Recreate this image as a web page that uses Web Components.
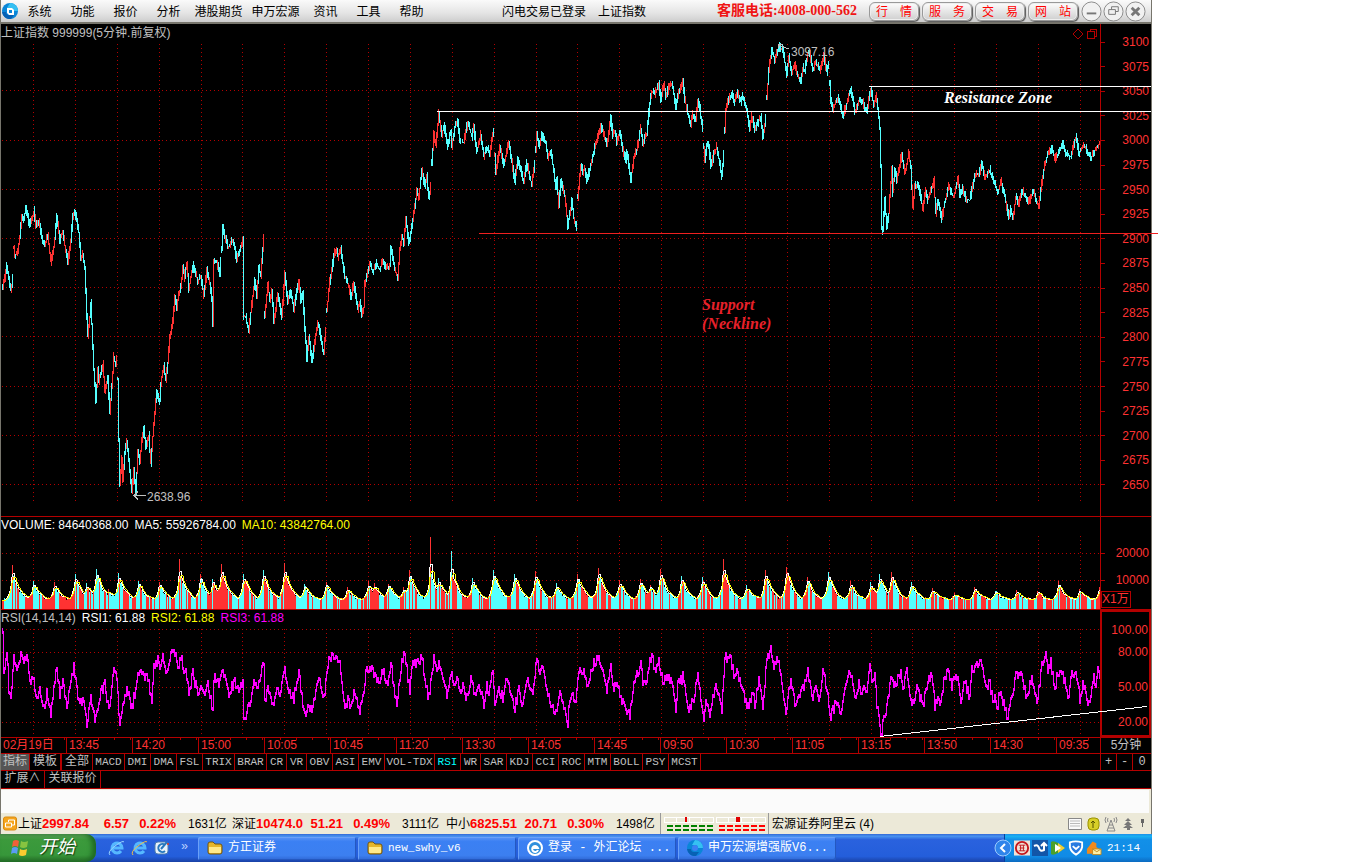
<!DOCTYPE html>
<html lang="zh-CN">
<head>
<meta charset="utf-8">
<title>上证指数 999999</title>
<style>
  body {
    margin: 0;
    background: #fff;
    font: 12px/16px "Liberation Sans", "Noto Sans CJK SC", sans-serif;
  }
</style>
</head>
<body>
<trading-desk></trading-desk>

<script>
// Crea el Shadow DOM y agrega los estilos comunes
function render(host, html) {
  host.attachShadow({ mode: 'open' }).innerHTML = `
    <style>
      * { box-sizing: border-box; }
      button {
        font: inherit; color: inherit; background: none;
        border: 0; margin: 0; padding: 0; white-space: nowrap; cursor: pointer;
      }
      svg { display: block; }
    </style>` + html;
}

// Números seudoaleatorios estables
function randomizer(seed) {
  return () => {
    seed = (seed * 1103515245 + 12345) % 2147483648;
    return seed / 2147483648;
  };
}

// "x,y x,y | x,y" -> lista de tramos
function parseRuns(text) {
  return text.split('|').map(run => run.trim().split(/\s+/).map(p => p.split(',').map(Number)));
}

function valueAt(points, x) {
  for (let i = 1; i < points.length; i++) {
    const [x0, y0] = points[i - 1];
    const [x1, y1] = points[i];
    if (x <= x1) return y0 + (y1 - y0) * (x - x0) / (x1 - x0 || 1);
  }
  return points[points.length - 1][1];
}

const PRICE = parseRuns(`
  2,287 4,278 6,266 8,279 10,291 12,278 |
  13,246 14,256 17,252 19,236 21,217 23,220 25,207 29,227 33,211 35,227 38,220 41,238 44,246 47,235 50,262 53,248
  56,217 59,240 62,232 64,246 67,264 70,240 72,218 74,211 78,233 80,258 82,253 84,268 86,317 87,336 89,317 90,303
  92,347 93,370 95,402 97,368 98,382 100,374 102,364 104,390 107,380 109,414 111,387 113,357 115,366 116,358 |
  117,380 118,440 119,486 121,457 122,480 124,453 126,440 129,470 131,492 133,471 135,494 137,453 139,463 141,440
  143,429 145,448 148,436 150,463 152,437 154,412 156,392 159,402 160,383 163,366 165,380 167,363 169,338 172,320
  174,297 176,308 178,293 180,288 182,268 184,278 186,262 188,290 190,277 193,266 197,281 200,277 203,296 206,271
  209,283 211,298 212,326 213,262 216,262 219,275 220,260 |
  221,250 222,228 227,248 232,240 236,260 239,250 242,241 243,316 245,318 248,332 250,313 254,280 256,298 258,266
  260,276 263,238 |
  264,316 267,284 269,300 271,292 273,321 277,295 281,317 284,275 287,302 290,292 293,309 298,282 300,301 302,293
  304,329 306,358 308,337 311,361 314,343 317,323 320,337 322,350 323,352 325,328 |
  326,311 329,282 333,257 335,249 337,257 340,249 344,277 347,283 350,298 353,283 357,309 359,302 361,314 363,308
  364,285 369,263 372,273 375,264 379,270 382,260 385,269 389,267 390,248 394,270 397,277 399,250 401,235 403,243
  405,219 408,244 412,220 416,192 418,198 421,169 424,187 426,177 428,198 430,184 |
  431,163 433,134 435,145 438,113 441,137 443,125 447,146 450,130 451,147 454,127 457,122 459,142 463,142 467,122
  471,137 473,128 476,152 480,135 483,157 486,147 489,155 491,138 493,129 |
  494,154 495,174 499,145 503,166 508,142 511,163 514,181 517,160 520,170 523,183 526,163 531,185 534,162 |
  535,150 536,133 538,146 541,135 545,142 547,158 550,150 553,173 555,188 556,178 558,206 560,181 564,197 567,226
  571,201 573,217 576,230 |
  577,197 580,166 582,172 584,168 586,182 591,160 595,143 600,127 603,134 606,145 610,119 612,135 614,130 616,142
  619,133 622,150 625,160 626,152 630,181 633,157 636,150 640,128 642,143 646,133 649,103 651,92 654,94 658,85
  660,100 663,84 665,96 668,88 671,84 673,93 675,108 678,92 682,81 684,100 687,113 690,126 692,114 695,121 697,101
  699,108 702,131 |
  703,148 704,160 706,145 708,146 710,166 713,155 716,147 721,176 723,155 |
  724,130 725,112 727,102 731,93 733,102 737,94 740,102 742,97 745,107 749,128 751,116 754,131 760,116 762,136 765,117 |
  766,98 768,70 771,49 774,60 778,46 780,50 782,49 786,75 788,58 791,73 794,64 797,75 800,81 802,68 804,71 807,53
  809,54 812,70 815,62 819,71 823,56 826,72 828,63 |
  829,84 830,100 832,109 837,97 842,116 847,100 850,89 854,112 858,101 862,103 866,112 870,88 873,107 875,96 877,107
  879,130 880,167 881,227 882,231 884,200 886,228 888,213 891,168 892,193 894,170 896,180 901,154 904,174 908,153
  910,167 912,207 914,187 917,183 922,208 925,190 927,200 933,181 935,213 937,200 941,219 944,202 948,187 953,197
  957,178 959,195 962,188 965,200 969,200 975,173 978,175 981,164 984,177 989,170 994,185 997,193 1000,182 1004,197
  1008,219 1010,208 1012,219 1015,197 1018,205 1021,190 1028,203 1033,190 1035,200 1038,206 1041,183 1044,165
  1047,153 1051,149 1054,159 1058,152 1062,144 1065,154 1070,157 1075,137 1078,153 1083,144 1090,159 1095,148 1100,142`);

const RSI = parseRuns(`
  2,629 3,672 6,650 8,687 10,700 13,658 16,667 21,653 23,665 26,654 29,682 32,675 36,697 39,690 43,708 46,692 50,712
  56,667 59,692 62,682 66,708 73,665 77,698 82,700 86,724 90,695 94,717 101,690 104,682 108,710 113,672 116,678
  119,724 123,700 126,690 131,707 137,678 142,673 147,678 151,700 153,668 157,660 159,670 162,658 165,673 171,651
  174,651 177,667 181,657 184,675 185,667 188,693 192,673 196,690 203,692 207,682 212,710 213,677 218,682 222,667
  228,692 234,680 239,690 242,677 243,718 246,712 250,700 253,680 256,688 260,673 263,663 264,700 267,687 273,705
  276,688 279,695 284,670 288,692 293,697 298,670 302,705 305,720 307,700 310,710 318,678 323,700 327,663 334,654
  340,668 344,707 348,698 350,707 353,690 359,710 362,697 365,670 371,667 373,677 378,682 382,670 387,688 390,660
  394,697 396,705 401,660 404,654 407,677 409,690 412,660 416,665 421,654 424,680 428,698 433,657 436,670 438,660
  442,680 446,693 451,673 453,685 456,677 460,693 462,680 465,698 470,680 475,697 478,680 483,707 486,683 488,692
  492,670 494,707 498,687 502,698 506,677 511,698 514,707 518,690 521,703 526,680 532,690 536,657 538,672 542,670
  546,687 550,702 554,718 556,705 560,692 563,703 567,722 569,697 571,690 575,702 578,670 583,670 586,687 591,667
  597,657 602,670 606,690 610,665 613,687 617,685 622,703 629,713 633,682 640,665 642,682 646,677 651,653 654,670
  658,662 662,680 666,678 670,677 675,710 677,685 682,677 688,713 693,698 697,673 703,718 705,703 709,712 715,683
  721,708 724,658 730,660 733,673 736,670 740,687 748,708 752,690 754,705 758,682 762,707 766,660 770,650 773,667
  777,660 780,677 785,708 790,683 795,707 801,690 807,672 812,695 814,685 819,700 822,670 827,690 829,717 835,702
  840,710 845,682 849,673 855,697 858,683 860,698 862,687 865,695 869,668 871,680 874,677 876,703 881,736 883,713
  885,712 890,677 894,683 900,672 902,688 906,673 911,708 916,690 920,698 923,703 925,685 931,675 934,705 937,697
  939,705 943,680 947,667 951,688 955,670 960,698 964,680 969,700 971,670 980,663 985,687 989,680 992,703 994,697
  996,710 999,690 1004,707 1007,718 1009,703 1015,677 1020,675 1026,697 1031,673 1034,695 1037,698 1041,665 1045,653
  1047,668 1050,662 1054,687 1057,673 1062,673 1067,697 1071,673 1074,670 1079,698 1082,683 1088,703 1093,678
  1095,688 1097,670 1100,677`)[0];

// Picos de volumen: x, altura y 1 si la vela baja
const VOLUME_PEAKS = `12,44 33,28,1 54,27 75,35,1 86,26,1 96,40,1 108,20 118,36,1 138,28,1 159,27 179,50 200,35 212,30,1
  221,45 243,35,1 263,39,1 284,46 304,25,1 326,27 347,22 368,28 374,26 388,25 403,22 409,39 430,72 438,31,1 451,58,1
  472,31,1 493,39,1 514,35,1 535,38 556,26,1 577,35 598,41 619,29 640,30 650,24 660,40 681,33,1 702,32,1 723,50
  746,24,1 765,39 786,42 807,32 828,37,1 850,28 870,27,1 879,35,1 891,37 911,27,1 932,21 954,16 974,22 995,18,1
  1016,19 1037,18 1058,28 1079,20 1099,22`.split(/\s+/).map(p => p.split(',').map(Number));

// Rejilla punteada compartida por los tres paneles
function gridLines(top, bottom, rows) {
  let d = '';
  for (let i = 0; i < 26; i++) {
    d += `M${Math.round(33 + i * 41.88) + 0.5} ${top}V${bottom}`;
  }
  rows.forEach(y => { d += `M2 ${y + 0.5}H1100`; });
  return `<path d="${d}" stroke="#b40000" stroke-dasharray="1 3" fill="none"/>`;
}

function priceBars() {
  const rand = randomizer(77);
  let up = '';
  let down = '';
  PRICE.forEach(run => {
    const first = run[0][0];
    const last = run[run.length - 1][0];
    for (let x = first; x <= last; x++) {
      const from = valueAt(run, Math.max(first, x - 1));
      const to = valueAt(run, x);
      const high = Math.round(Math.min(from, to) - rand() * 5);
      const low = Math.round(Math.max(from, to) + rand() * 4);
      const bar = `M${x} ${high}h1V${low}h-1z`;
      const rising = to < from ? rand() < 0.6 : rand() < 0.15;
      if (rising) up += bar; else down += bar;
    }
  });
  return `<path d="${up}" fill="#ff3232"/><path d="${down}" fill="#54ffff"/>`;
}

function rsiLine() {
  const rand = randomizer(19);
  let d = '';
  let from = 629;
  for (let x = 2; x <= 1099; x++) {
    const to = Math.min(Math.round(valueAt(RSI, x) + (rand() - 0.5) * 10), 734);
    d += `M${x} ${Math.min(from, to) - 1}h1V${Math.max(from, to) + 2}h-1z`;
    from = to;
  }
  return `<path d="${d}" fill="#ff00ff"/>`;
}

function volumeBars() {
  const rand = randomizer(5);
  const heights = [];
  const falling = {};
  VOLUME_PEAKS.forEach(([px, , down]) => { falling[px] = Boolean(down); });
  for (let x = 2; x <= 1100; x++) {
    let h = (x > 910 ? 5 : 7) + rand() * 4;
    VOLUME_PEAKS.forEach(([px, ph]) => {
      const away = x - px;
      const body = Math.min(ph * 0.85, 36) - 6;
      if (away === 0) h = Math.max(h, ph);
      else if (away > 0) h = Math.max(h, 6 + body * Math.exp(-away / 7) + rand() * 4);
      else if (away > -7) h = Math.max(h, 6 + body * Math.exp(away / 3) + rand() * 3);
    });
    heights.push(h);
  }
  let up = '';
  let down = '';
  let rising = true;
  heights.forEach((h, i) => {
    const x = i + 2;
    if (rand() < 0.55) rising = rand() < 0.42;
    const bar = `M${x} 609V${Math.round(609 - h)}h1V609z`;
    if (x in falling ? !falling[x] : rising) up += bar; else down += bar;
  });
  const average = n => 'M' + heights.map((h, i) => {
    const part = heights.slice(Math.max(0, i - n + 1), i + 1);
    return `${i + 2} ${Math.round(609 - part.reduce((a, b) => a + b, 0) / part.length)}`;
  }).join('L');
  return `<path d="${up}" fill="#ff3232"/><path d="${down}" fill="#54ffff"/>
    <path d="${average(3)}" fill="none" stroke="#fff"/>
    <path d="${average(5)}" fill="none" stroke="#ff0"/>`;
}

const SWIRL = `
  <circle cx="8" cy="8" r="8" fill="#0a86d8"/>
  <path d="M8 0a8 8 0 0 1 8 8h-5a3 3 0 0 0-3-3H5z" fill="#35c0f2"/>
  <path d="M0 9a8 8 0 0 0 9 7l3-4H7a3 3 0 0 1-3-3z" fill="#0761b4"/>`;

// Barra superior con el menú
class TitleBar extends HTMLElement {
  constructor() {
    super();
    const menu = ['系统', '功能', '报价', '分析', '港股期货', '申万宏源', '资讯', '工具', '帮助'];
    const links = ['行　情', '服　务', '交　易', '网　站'];
    render(this, `
      <style>
        :host {
          display: flex; align-items: center; height: 24px; color: #000;
          background: linear-gradient(#fafafa, #e4e4e4 60%, #cdcdcd);
          border-bottom: 2px solid #77756c; font-family: "Noto Sans CJK SC", sans-serif;
        }
        nav { display: flex; width: 433px; }
        .logo { margin-left: 1px; flex: none; }
        nav button { width: 43px; }
        nav button.wide { width: 57px; }
        .state { display: flex; gap: 12px; flex: 1; margin-left: 51px; white-space: nowrap; }
        .phone { color: #f01414; font: bold 14px/16px "Liberation Serif", "Noto Sans CJK SC", serif; white-space: nowrap; margin-right: 12px; }
        .links { display: flex; gap: 3px; margin-right: 3px; }
        .links button {
          width: 50px; height: 19px; line-height: 16px; color: #f00;
          border: 1px solid #999; border-radius: 6px; background: linear-gradient(#fdfdfd, #cfcfcf);
          box-shadow: inset 0 0 0 1px #eee, 1px 1px 1px #555;
        }
        .window { display: flex; gap: 1px; margin-right: 5px; }
      </style>
      <svg class="logo" width="16" height="16" viewBox="0 0 16 16">${SWIRL}<path d="M5 5h5l2 2v5H7L5 10z" fill="#fff"/><path d="M7 7h3v3H7z" fill="#0a86d8"/></svg>
      <nav>${menu.map(m => `<button class="${m.length > 2 ? 'wide' : ''}">${m}</button>`).join('')}</nav>
      <div class="state"><span>闪电交易已登录</span><span>上证指数</span></div>
      <span class="phone">客服电话:4008-000-562</span>
      <div class="links">${links.map(l => `<button>${l}</button>`).join('')}</div>
      <div class="window">
        ${['M6 13h10', 'M9 9V6h7v5h-3M6 9h7v5H6z', 'M7 7l8 8M15 7l-8 8'].map((d, i) => `
          <button aria-label="${['最小化', '还原', '关闭'][i]}"><svg width="21" height="21" viewBox="0 0 22 22">
            <circle cx="11" cy="11" r="10" fill="#f1f1f1" stroke="#888" stroke-width="1"/>
            <path d="${d}" fill="none" stroke="#777" stroke-width="${[2, 1, 3][i]}"/>
          </svg></button>`).join('')}
      </div>`);
  }
}
customElements.define('title-bar', TitleBar);

// Un panel: encabezado, dibujo y escala a la derecha
class ChartPanel extends HTMLElement {
  constructor() {
    super();
    render(this, `
      <style>
        :host { display: flex; border-bottom: 1px solid #b40000; }
        .plot { flex: 1; min-width: 0; display: flex; flex-direction: column; }
        header { display: flex; gap: 6px; height: 16px; line-height: 16px; color: #fff; white-space: nowrap; }
        :host([kind="price"]) header { height: 18px; line-height: 18px; }
        .area { flex: 1; min-height: 0; position: relative; }
        .area svg { position: absolute; inset: 0; width: 100%; height: 100%; }
        .scale { width: 51px; flex: none; border-left: 1px solid #b40000; color: #ff3232; }
      </style>
      <div class="plot">
        <header><slot name="title"></slot></header>
        <div class="area"></div>
      </div>
      <div class="scale"><slot></slot></div>`);
  }

  connectedCallback() {
    const kinds = {
      price: ['1 42 1099 474', () => gridLines(44, 502, [90, 140, 189, 238, 287, 336, 386, 435, 484]) + priceBars()],
      volume: ['1 533 1099 76', () => gridLines(536, 609, [553, 580]) + volumeBars()],
      rsi: ['1 626 1099 111', () => gridLines(629, 737, [629, 652, 687, 722]) + rsiLine()]
    };
    const [box, draw] = kinds[this.getAttribute('kind')];
    this.shadowRoot.querySelector('.area').innerHTML =
      `<svg viewBox="${box}" preserveAspectRatio="none" shape-rendering="crispEdges">${draw()}</svg>`;
  }
}
customElements.define('chart-panel', ChartPanel);

// Los tres paneles y las anotaciones
class ChartBoard extends HTMLElement {
  constructor() {
    super();
    const prices = [];
    for (let p = 3100; p >= 2650; p -= 25) prices.push(p);
    render(this, `
      <style>
        :host { position: relative; display: flex; flex-direction: column; background: #000; }
        chart-panel[kind="price"] { flex: 1; }
        chart-panel[kind="volume"] { height: 93px; }
        chart-panel[kind="rsi"] { height: 127px; border-bottom: 0; }
        .muted { color: #c0c0c0; }
        .yellow { color: #ff0; }
        .magenta { color: #f0f; }
        .tools { margin-left: auto; margin-right: 2px; display: flex; align-items: center; gap: 2px; }
        .labels { display: flex; flex-direction: column; height: 100%; padding-right: 2px; }
        .labels span { display: flex; justify-content: space-between; align-items: center; height: 16px; }
        .labels span::before { content: ""; width: 4px; height: 1px; background: #b40000; }
        .prices { justify-content: space-between; padding: 10px 2px 23px 0; }
        .volumes { padding-top: 28px; gap: 11px; }
        .volumes b {
          font-weight: normal; width: 30px; height: 17px; line-height: 15px; margin-top: -8px;
          border: 1px solid #b40000;
        }
        .levels { border: 2px solid #b40000; border-left-width: 1px; padding: 10px 1px 0 0; }
        .levels span::before { visibility: hidden; }
        .levels span + span { margin-top: 6px; }
        .levels span + span + span { margin-top: 19px; }
        .overlay { position: absolute; inset: 0; width: 100%; height: 100%; overflow: visible; pointer-events: none; }
        .note { position: absolute; white-space: nowrap; color: #c0c0c0; }
        .big { font: italic bold 16px/19px "Liberation Serif", serif; color: #fff; }
        .high { left: 790px; top: 20px; }
        .low { left: 146px; top: 465px; }
        .zone { right: 99px; top: 64px; }
        .neck { left: 701px; top: 271px; color: #e8202a; }
      </style>
      <chart-panel kind="price">
        <span slot="title" class="muted">上证指数 999999(5分钟.前复权)</span>
        <span slot="title" class="tools">
          <button aria-label="标记"><svg width="11" height="11"><path d="M5 1l5 5-5 5-5-5z" fill="none" stroke="#b40000"/></svg></button>
          <button aria-label="窗口"><svg width="12" height="11" shape-rendering="crispEdges"><path d="M1.500 3.500h7v7h-7zM4 3V1.500h6.500V8H9" fill="none" stroke="#b40000"/></svg></button>
        </span>
        <div class="labels prices">${prices.map(p => `<span>${p}</span>`).join('')}</div>
      </chart-panel>
      <chart-panel kind="volume">
        <span slot="title">VOLUME: 84640368.00</span>
        <span slot="title">MA5: 55926784.00</span>
        <span slot="title" class="yellow">MA10: 43842764.00</span>
        <div class="labels volumes"><span>20000</span><span>10000</span><b>X1万</b></div>
      </chart-panel>
      <chart-panel kind="rsi">
        <span slot="title" class="muted">RSI(14,14,14)</span>
        <span slot="title">RSI1: 61.88</span>
        <span slot="title" class="yellow">RSI2: 61.88</span>
        <span slot="title" class="magenta">RSI3: 61.88</span>
        <div class="labels levels"><span>100.00</span><span>80.00</span><span>50.00</span><span>20.00</span></div>
      </chart-panel>
      <svg class="overlay" viewBox="1 24 1150 713" preserveAspectRatio="none" fill="none" shape-rendering="crispEdges">
        <path d="M437 111.5H1151M869 86.5H1151M880 736.5L1147 706.5" stroke="#fff"/>
        <path d="M479 233.5H1158" stroke="#f02020"/>
        <path d="M789 49l-11-4M783 44h-5v4M146 495.500h-12M138 491.500l-4 4 4 4" stroke="#c0c0c0"/>
      </svg>
      <span class="note high">3097.16</span>
      <span class="note low">2638.96</span>
      <span class="note big zone">Resistance Zone</span>
      <span class="note big neck">Support<br>(Neckline)</span>`);
  }
}
customElements.define('chart-board', ChartBoard);

class TimeAxis extends HTMLElement {
  constructor() {
    super();
    const times = ['02月19日', '13:45', '14:20', '15:00', '10:05', '10:45', '11:20', '13:30', '14:05', '14:45',
      '09:50', '10:30', '11:05', '13:15', '13:50', '14:30', '09:35'];
    render(this, `
      <style>
        :host { display: flex; height: 16px; line-height: 15px; background: #000; border-top: 1px solid #b40000; color: #ff3232; }
        ol { flex: 1; display: flex; margin: 0; padding: 0; list-style: none; }
        li {
          flex: 66 1 0; min-width: 0; padding-left: 2px; border-right: 1px solid #b40000; white-space: nowrap;
          background: repeating-linear-gradient(90deg, transparent 0 15px, #b40000 15px 16px) top / 100% 2px no-repeat;
        }
        li:last-child { flex-grow: 43; border-right: 0; }
        b { width: 51px; border-left: 1px solid #b40000; color: #c0c0c0; font-weight: normal; text-align: center; }
      </style>
      <ol>${times.map(t => `<li>${t}</li>`).join('')}</ol><b>5分钟</b>`);
  }
}
customElements.define('time-axis', TimeAxis);

// Pestañas de indicadores
class IndicatorTabs extends HTMLElement {
  constructor() {
    super();
    const names = ['MACD', 'DMI', 'DMA', 'FSL', 'TRIX', 'BRAR', 'CR', 'VR', 'OBV', 'ASI', 'EMV', 'VOL-TDX', 'RSI',
      'WR', 'SAR', 'KDJ', 'CCI', 'ROC', 'MTM', 'BOLL', 'PSY', 'MCST'];
    render(this, `
      <style>
        :host { display: block; background: #000; color: #c0c0c0; font-family: "Liberation Mono", "Noto Sans CJK SC", monospace; }
        div { display: flex; height: 17px; line-height: 16px; border-top: 1px solid #b40000; }
        .more { height: 19px; line-height: 17px; border-bottom: 1px solid #b40000; }
        button { border-right: 1px solid #b40000; flex: none; }
        .code { font-size: 11px; }
        .group { width: 31px; }
        .group.on { width: 29px; background: #555; }
        .group.end { border-right-width: 2px; width: 32px; }
        .current { color: #00ffff; }
        .zoom { width: 16px; }
        .zoom.first { margin-left: auto; width: 17px; border-left: 1px solid #b40000; }
        .zoom:last-child { width: 18px; border-right: 0; }
        .expand { width: 44px; }
        .related { width: 56px; }
      </style>
      <div>
        <button class="group on">指标</button><button class="group end">模板</button><button class="group">全部</button>
        ${names.map(n => `<button class="code ${n === 'RSI' ? 'current' : ''}" style="width:${n.length * 6 + 8}px">${n}</button>`).join('')}
        <button class="zoom first">+</button><button class="zoom">-</button><button class="zoom">0</button>
      </div>
      <div class="more"><button class="expand">扩展∧</button><button class="related">关联报价</button></div>`);
  }
}
customElements.define('indicator-tabs', IndicatorTabs);

// Una cotización de índice en la barra de estado
class IndexQuote extends HTMLElement {
  constructor() {
    super();
    render(this, `
      <style>
        :host { display: grid; grid-template-columns: 24px 47px 40px 47px 56px; color: #000; white-space: nowrap; }
        b { color: #f00; font-size: 13px; }
        b + b { text-align: right; }
        i { font-style: normal; padding-left: 12px; }
      </style>
      <span><slot></slot></span>
      <b>${this.getAttribute('value')}</b><b>${this.getAttribute('change')}</b>
      <b>${this.getAttribute('percent')}</b><i>${this.getAttribute('amount')}</i>`);
  }
}
customElements.define('index-quote', IndexQuote);

class StatusBar extends HTMLElement {
  constructor() {
    super();
    const dashes = (x, y, color) => `<path d="M${x} ${y}h46M${x} ${y + 4}h46" stroke="${color}" stroke-width="2" stroke-dasharray="6 2"/>`;
    render(this, `
      <style>
        :host { display: flex; align-items: center; height: 21px; background: #ece9d8; color: #000; white-space: nowrap; }
        .copy { width: 16px; margin: 0 0 0 1px; flex: none; }
        .meter { border: 1px solid #999; border-width: 0 1px; height: 21px; margin: 0 3px 0 0; padding: 3px 2px 0; }
        .icons { display: flex; align-items: center; gap: 4px; margin-left: auto; margin-right: 4px; }
      </style>
      <svg class="copy" width="15" height="15" viewBox="0 0 15 15"><rect x="1" y="1" width="13" height="13" rx="2" fill="#f5a41c" stroke="#d98a10"/><path d="M6 6V4h6v5H9M3 7h6v4H3z" fill="none" stroke="#fff"/></svg>
      <index-quote value="2997.84" change="6.57" percent="0.22%" amount="1631亿">上证</index-quote>
      <index-quote value="10474.0" change="51.21" percent="0.49%" amount="3111亿">深证</index-quote>
      <index-quote value="6825.51" change="20.71" percent="0.30%" amount="1498亿">中小</index-quote>
      <div class="meter">
        <svg width="103" height="17" shape-rendering="crispEdges" fill="none">
          <path d="M1.500 1.500h49v5h-49zM13.500 2v5M26.500 2v5M38.500 2v5M53.500 1.500h49v5h-49zM65.500 2v5M78.500 2v5M90.500 2v5" stroke="#fff"/>
          <path d="M22 1h2v5h-2zM73 1h4v5h-4z" fill="#e00000"/>
          ${dashes(4, 10, '#008000')}${dashes(56, 10, '#ff0000')}
        </svg>
      </div>
      <span>宏源证券阿里云 (4)</span>
      <span class="icons">
        <svg width="15" height="14"><path d="M.5 1.500h13v11H.5z" fill="#fafafa" stroke="#888"/><path d="M2 4h10M2 6.500h10M2 9h10" stroke="#bbb"/></svg>
        <svg width="13" height="14"><rect x="1" y="1" width="11" height="12" rx="4" fill="#d8cf28" stroke="#9a9200"/><path d="M6 11V4M4 6l2-2 2 2" fill="none" stroke="#555200"/></svg>
        <svg width="15" height="16" fill="none" stroke="#888"><path d="M2 1q-2 3 0 6M4 2q-1 2 0 4M12 1q2 3 0 6M10 2q1 2 0 4M7 4l-4 11h8zM5 9h4M4 12h6"/></svg>
        <svg width="12" height="14" fill="#777"><path d="M5 1l3 3H2zM5 4l4 4H1zM5 7l5 4H0zM4 11h3v2H4z"/></svg>
        <svg width="8" height="14" fill="#666"><path d="M2 2h3v4H4v4H3V6H2z"/></svg>
      </span>`);
  }
}
customElements.define('status-bar', StatusBar);

class TaskButton extends HTMLElement {
  constructor() {
    super();
    render(this, `
      <style>
        :host { display: block; flex: 0 1 158px; min-width: 0; }
        button {
          display: flex; align-items: center; gap: 5px; width: 100%; height: 23px; padding-left: 9px; color: #fff;
          border-radius: 2px; background: linear-gradient(#5a94f6, #3b80f3 20%, #3c7ff0 80%, #2f67d4);
          box-shadow: inset 1px 1px 0 #6aa0f8, inset -1px -1px 0 #2458c0;
        }
      </style>
      <button><slot name="icon"></slot><slot></slot></button>`);
  }
}
customElements.define('task-button', TaskButton);

class TaskBar extends HTMLElement {
  constructor() {
    super();
    const folder = '<svg slot="icon" width="16" height="14" viewBox="0 0 16 14"><path d="M1 3q0-2 2-2h3l2 2h5q2 0 2 2v6q0 2-2 2H3q-2 0-2-2z" fill="#e5b62c" stroke="#705410"/><path d="M2 6h12v5q0 1-1 1H3q-1 0-1-1z" fill="#ffe98a"/></svg>';
    const explorer = swoosh => `<svg width="18" height="18" viewBox="0 0 18 18" fill="none">
      <path d="M13 12a5 5 0 1 1 1-3H5" stroke="#56b8ff" stroke-width="3"/>
      <path d="M2 16q-3-3 5-9t9-4" stroke="${swoosh}"/></svg>`;
    render(this, `
      <style>
        :host {
          display: flex; align-items: center; height: 28px; color: #fff; white-space: nowrap; overflow: hidden;
          font-family: "Liberation Mono", "Noto Sans CJK SC", monospace;
          background: linear-gradient(#3168d5, #4993f0 8%, #2a62de 20%, #245edb 80%, #1941a5);
        }
        .start {
          display: flex; align-items: center; gap: 9px; width: 96px; height: 28px; padding-left: 10px;
          border-radius: 0 10px 10px 0; font-size: 18px; font-style: italic; text-shadow: 1px 1px 1px #143c10;
          background: linear-gradient(#5fa35c, #3c9a3c 20%, #37973a 75%, #266e28);
          box-shadow: inset -4px 0 5px #1f6a24;
        }
        .quick { display: flex; align-items: center; gap: 5px; margin-left: 12px; width: 90px; }
        .quick span { margin-left: 6px; align-self: flex-start; color: #b8d0ff; }
        .tasks { flex: 1; display: flex; gap: 2px; min-width: 0; }
        .tray {
          display: flex; align-items: center; gap: 2px; height: 28px; width: 148px; flex: none;
          background: linear-gradient(#1c8fe8, #19b2f2 8%, #1290e8 20%, #108be6 80%, #0c6ac0);
          border-left: 1px solid #0a3f9c; font-size: 11px;
        }
        .tray button { margin-left: -11px; }
        time { margin-left: 3px; }
        .latin { font-size: 11px; }
      </style>
      <button class="start">
        <svg width="20" height="20" viewBox="0 0 20 20">
          <path d="M3 3q3-2 6 0L8 9q-3-2-6 0z" fill="#f0603a"/><path d="M11 3q3 2 7 0l-1 6q-4 2-7 0z" fill="#86c440"/>
          <path d="M2 10q3-2 6 0l-1 6q-3-2-6 0z" fill="#5a9cf4"/><path d="M10 11q3 2 7 0l-1 6q-4 2-7 0z" fill="#fccb30"/>
        </svg>开始</button>
      <div class="quick">
        ${explorer('#9bd6ff')}${explorer('#f5c242')}
        <svg width="16" height="16" viewBox="0 0 16 16"><rect x="1" y="2" width="13" height="12" rx="3" fill="#e8f2fb" stroke="#4f7fae"/><path d="M11 5a4 4 0 1 0 0 6M7 9l6-7" fill="none" stroke="#2878bd" stroke-width="2"/><circle cx="14" cy="4" r="1" fill="#e63a1e"/></svg>
        <span>»</span>
      </div>
      <div class="tasks">
        <task-button>${folder}方正证券</task-button>
        <task-button>${folder}<span class="latin">new_swhy_v6</span></task-button>
        <task-button><svg slot="icon" width="16" height="16" viewBox="0 0 16 16"><circle cx="8" cy="8" r="7" fill="#2f8fdc" stroke="#fff" stroke-width="2"/><path d="M11 10a3 3 0 1 1 0-2H5" fill="none" stroke="#fff" stroke-width="2"/></svg>登录 - 外汇论坛 ...</task-button>
        <task-button><svg slot="icon" width="16" height="16" viewBox="0 0 16 16">${SWIRL}<circle cx="8" cy="8" r="3" fill="#3b80f3"/></svg>申万宏源增强版V6...</task-button>
      </div>
      <div class="tray">
        <button aria-label="显示图标"><svg width="18" height="18" viewBox="0 0 18 18"><circle cx="9" cy="9" r="8" fill="#2f84ea" stroke="#9ccbff"/><path d="M11 5L7 9l4 4" fill="none" stroke="#fff" stroke-width="2"/></svg></button>
        <svg width="16" height="16" viewBox="0 0 17 16"><path d="M0 0h17v16H0z" fill="#f0e2d8"/><circle cx="8.500" cy="8" r="6.500" fill="none" stroke="#c4161c" stroke-width="2"/><path d="M5 5h7M5 11h7M6 8h5M7 5v6M10 5v6" stroke="#c4161c"/></svg>
        <svg width="16" height="16" viewBox="0 0 16 16"><path d="M0 0h16v16H0z" fill="#1256a8"/><path d="M2 6q4-2 5 2t5 2V3M9 6l3-3 3 3" fill="none" stroke="#fff" stroke-width="2"/></svg>
        <svg width="16" height="16" viewBox="0 0 16 16"><path d="M1 2q2-2 7 1l7 5-7 5q-5 3-7 1z" fill="#4aa02c"/><path d="M8 3l7 5-7 5z" fill="#f0cf3a"/><path d="M5 4l6 4-6 4z" fill="#fff"/></svg>
        <svg width="16" height="16" viewBox="0 0 17 16"><path d="M2 2q6-2 13 0v5q-1 5-6.500 8Q3 12 2 7z" fill="#2a7be0" stroke="#fff" stroke-width="2"/><path d="M5 6l3.500 3L12 6" fill="none" stroke="#fff" stroke-width="2"/></svg>
        <svg width="16" height="16" viewBox="0 0 17 16"><path d="M1 14V9l6-8 4 2v4l4 3v4z" fill="#f08a1c"/><path d="M7 9h9v6H7z" fill="#fff0a8" stroke="#c08a20"/><path d="M7 9l4.500 3L16 9" fill="none" stroke="#c08a20"/></svg>
        <time>21:14</time>
      </div>`);
  }
}
customElements.define('task-bar', TaskBar);

// Escritorio completo
class TradingDesk extends HTMLElement {
  constructor() {
    super();
    render(this, `
      <style>
        :host { display: flex; flex-direction: column; min-height: calc(100vh - 2px); margin-right: 204px; }
        main { flex: 1; display: flex; flex-direction: column; border: solid #77756c; border-width: 0 1px; }
        chart-board { flex: 1; min-height: 500px; }
        .blank { height: 24px; background: #fbfbfb; border-top: 1px solid #ece9d8; border-right: 2px solid #ece9d8; }
      </style>
      <main>
        <title-bar></title-bar>
        <chart-board></chart-board>
        <time-axis></time-axis>
        <indicator-tabs></indicator-tabs>
        <div class="blank"></div>
        <status-bar></status-bar>
      </main>
      <task-bar></task-bar>`);
  }
}
customElements.define('trading-desk', TradingDesk);
</script>
</body>
</html>
